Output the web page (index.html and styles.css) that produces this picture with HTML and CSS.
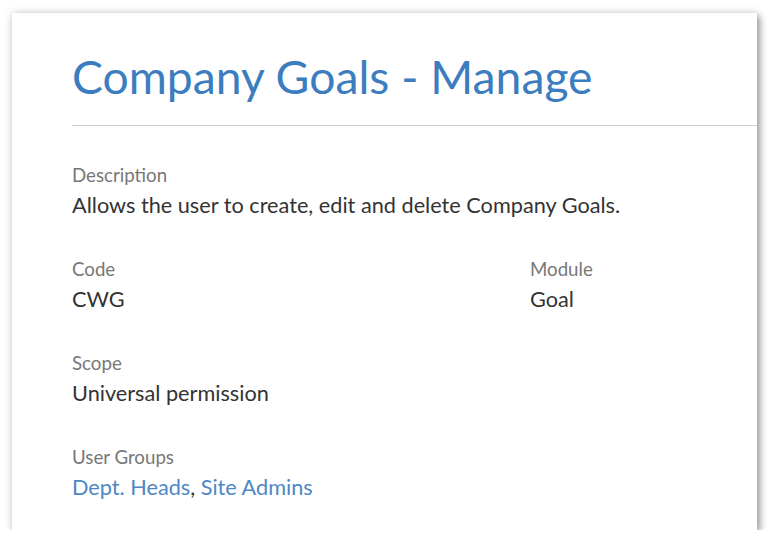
FILE: index.html
```html
<!DOCTYPE html>
<html>
<head>
<meta charset="utf-8">
<link rel="stylesheet" href="styles.css">
</head>
<body>
<div class="card">
  <h1 class="title">Company Goals - Manage</h1>
  <div class="divider"></div>
  <div class="content">
    <div class="field">
      <div class="label">Description</div>
      <div class="value">Allows the user to create, edit and delete Company Goals.</div>
    </div>
    <div class="row">
      <div class="field col">
        <div class="label">Code</div>
        <div class="value">CWG</div>
      </div>
      <div class="field">
        <div class="label">Module</div>
        <div class="value">Goal</div>
      </div>
    </div>
    <div class="field">
      <div class="label">Scope</div>
      <div class="value">Universal permission</div>
    </div>
    <div class="field">
      <div class="label">User Groups</div>
      <div class="value"><a class="link" href="#">Dept. Heads</a>, <a class="link" href="#">Site Admins</a></div>
    </div>
  </div>
</div>
</body>
</html>
```
FILE: styles.css
```css
html, body {
  margin: 0;
  padding: 0;
  background: #ffffff;
}
body {
  font-family: Lato, "Open Sans", sans-serif;
  overflow: hidden;
}
.card {
  margin: 13px 0 0 12px;
  width: 745px;
  height: 517px;
  background: #fff;
  box-shadow: 3px 3px 7px rgba(0,0,0,0.35), 0 0 9px rgba(0,0,0,0.15);
  box-sizing: border-box;
  padding-top: 36px;
}
.title {
  margin: 0 0 0 60px;
  font-size: 46.3px;
  line-height: 54px;
  font-weight: 400;
  color: #3c7dc0;
}
.divider {
  margin: 22px 0 0 60px;
  height: 1px;
  background: #cfcfcf;
}
.content {
  padding: 38px 0 0 60px;
  display: flex;
  flex-direction: column;
  gap: 38px;
}
.row {
  display: flex;
}
.col {
  flex: 0 0 458px;
}
.label {
  font-size: 18.7px;
  line-height: 22px;
  color: #777;
}
.value {
  margin-top: 4px;
  font-size: 21.7px;
  line-height: 30px;
  color: #333;
}
.link {
  color: #4d87c4;
  text-decoration: none;
}
```
